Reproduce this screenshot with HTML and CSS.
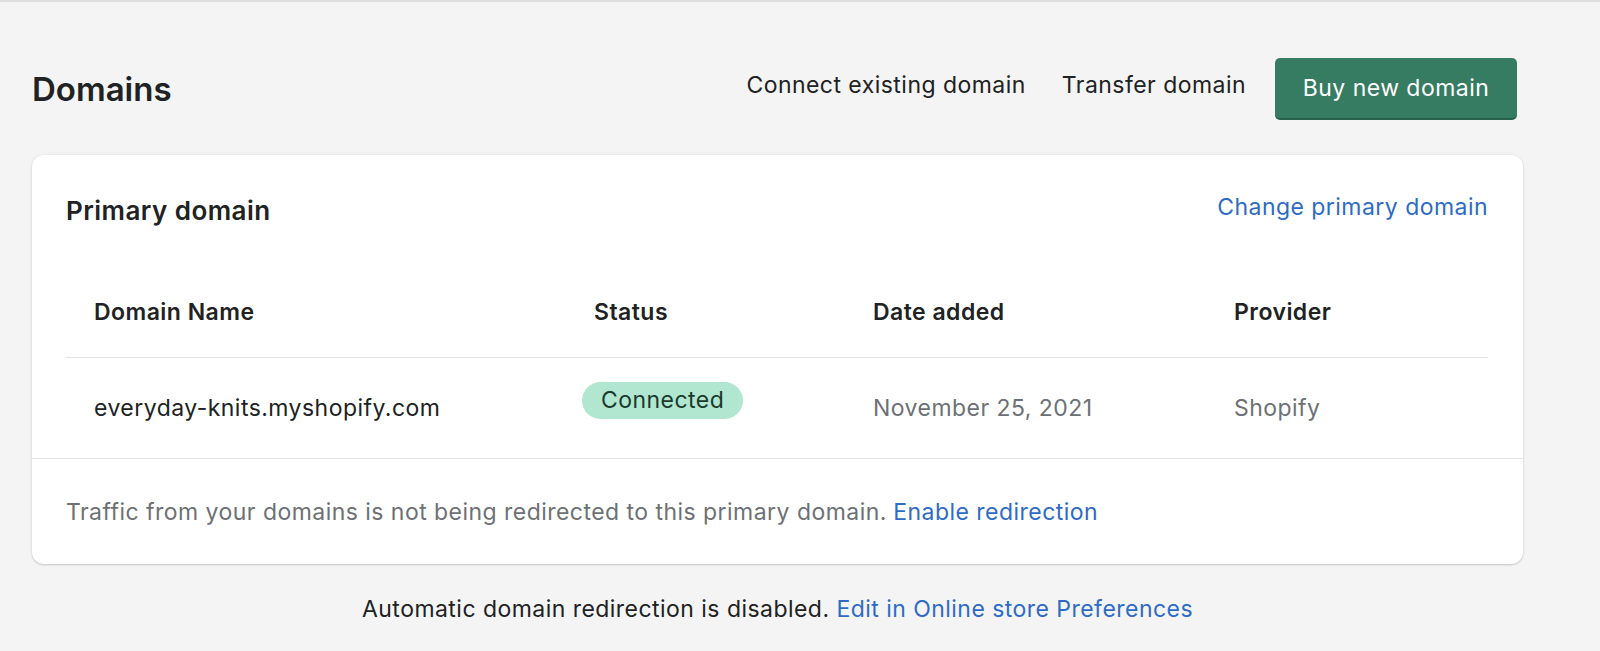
FILE: index.html
```html
<!DOCTYPE html>
<html lang="en">
  <head>
    <meta charset="UTF-8" />
    <meta name="viewport" content="width=device-width, initial-scale=1.0" />
    <title>Domains</title>
    <link rel="stylesheet" href="styles.css">
  </head>

  <body>
    <main class="page">
      <header class="page-header">
        <h1 class="page-title">Domains</h1>
        <div class="page-actions">
          <a class="plain-action" href="#">Connect existing domain</a>
          <a class="plain-action" href="#">Transfer domain</a>
          <button class="primary-btn" type="button">Buy new domain</button>
        </div>
      </header>

      <section class="card">
        <div class="card-head">
          <h2 class="card-title">Primary domain</h2>
          <a class="link" href="#">Change primary domain</a>
        </div>

        <div class="table">
          <div class="table-row table-headings">
            <div>Domain Name</div>
            <div>Status</div>
            <div>Date added</div>
            <div>Provider</div>
          </div>
          <div class="table-row table-body">
            <div>everyday-knits.myshopify.com</div>
            <div class="status-cell"><span class="badge">Connected</span></div>
            <div class="muted">November 25, 2021</div>
            <div class="muted">Shopify</div>
          </div>
        </div>

        <div class="card-foot">
          Traffic from your domains is not being redirected to this primary domain.
          <a class="link" href="#">Enable redirection</a>
        </div>
      </section>

      <p class="footnote">
        Automatic domain redirection is disabled.
        <a class="link" href="#">Edit in Online store Preferences</a>
      </p>
    </main>
  </body>
</html>
```

FILE: styles.css
```css
body {
  margin: 0;
  font-family: Inter, "Noto Sans", sans-serif;
  font-size: 23px;
  letter-spacing: 0.02em;
  color: #202223;
  background-color: #f4f4f4;
  border-top: 2px solid #dedede;
}

.page {
  width: 1491px;
  padding-left: 32px;
}

.page-header {
  display: flex;
  align-items: center;
  justify-content: space-between;
  padding-top: 55px;
  height: 63px;
}

.page-title {
  margin: 0;
  font-size: 33px;
  font-weight: 600;
  letter-spacing: 0;
}

.page-actions {
  display: flex;
  align-items: center;
  padding-right: 6px;
}

.plain-action {
  color: #202223;
  text-decoration: none;
  margin-right: 36px;
  padding-bottom: 8px;
}

.plain-action + .plain-action {
  margin-right: 29px;
}

.primary-btn {
  font-family: inherit;
  font-size: 23px;
  letter-spacing: 0.02em;
  color: #fff;
  background-color: #357c62;
  border: none;
  border-bottom: 2px solid #24604a;
  border-radius: 5px;
  width: 242px;
  height: 62px;
  cursor: pointer;
}

.card {
  margin-top: 35px;
  background-color: #fff;
  border-radius: 12px;
  box-shadow: 0 0 4px rgba(23, 24, 24, 0.06), 0 1px 2px rgba(0, 0, 0, 0.16);
}

.card-head {
  display: flex;
  justify-content: space-between;
  align-items: flex-start;
  height: 111px;
  padding: 0 35px 0 34px;
  box-sizing: border-box;
}

.card-title {
  margin: 41px 0 0;
  font-size: 26px;
  font-weight: 600;
  line-height: 30px;
}

.link {
  color: #2e6bc6;
  text-decoration: none;
}

.card-head .link {
  margin-top: 37px;
  line-height: 30px;
}

.table {
  margin: 0 35px 0 34px;
}

.table-row {
  display: grid;
  grid-template-columns: 500px 279px 361px 1fr;
  align-items: center;
  padding-left: 28px;
}

.table-headings {
  height: 91px;
  font-weight: 600;
  border-bottom: 1px solid #e1e3e5;
}

.table-body {
  height: 100px;
}

.status-cell {
  margin-bottom: 15px;
}

.muted {
  color: #6d7175;
}

.badge {
  display: inline-block;
  margin-left: -12px;
  padding: 0 19px;
  line-height: 37px;
  border-radius: 19px;
  background-color: #b1e6d1;
  color: #1b3a2d;
}

.card-foot {
  border-top: 1px solid #e1e3e5;
  padding: 0 34px;
  height: 105px;
  display: flex;
  align-items: center;
  gap: 0.28em;
  color: #6d7175;
}

.footnote {
  margin: 31px 0 0;
  text-align: center;
}
```
